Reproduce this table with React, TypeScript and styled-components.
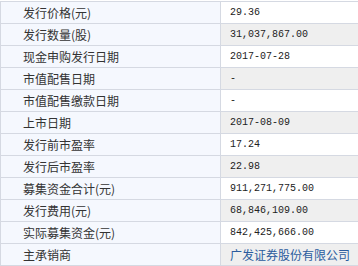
import React from 'react';
import styled, { createGlobalStyle } from 'styled-components';

const GlobalStyle = createGlobalStyle`
  html, body {
    margin: 0;
    padding: 0;
    background: #ffffff;
  }
`;

const Table = styled.div`
  width: 358px;
  margin-top: 1px;
  border-top: 1px solid #d5d9e2;
  border-left: 1px solid #d5d9e2;
  box-sizing: border-box;
  font-family: "Noto Sans CJK SC", "Liberation Sans", sans-serif;
  font-size: 12px;
  color: #333333;
`;

const Row = styled.div`
  display: grid;
  grid-template-columns: 220px 1fr;
  height: 22px;
  border-bottom: 1px solid #d5d9e2;
  box-sizing: border-box;
`;

const LabelCell = styled.div`
  display: flex;
  align-items: center;
  padding-left: 22px;
  background: #f5f8fe;
  border-right: 1px solid #d5d9e2;
  white-space: nowrap;
  line-height: 1;
`;

const ValueCell = styled.div<{ $striped?: boolean }>`
  display: flex;
  align-items: center;
  padding-left: 9px;
  background: ${({ $striped }) => ($striped ? '#efefef' : '#ffffff')};
  white-space: nowrap;
  line-height: 1;
`;

const Num = styled.span`
  font-family: "Liberation Mono", "DejaVu Sans Mono", monospace;
  font-size: 10px;
  color: #222222;
  padding-top: 1px;
`;

const Link = styled.span`
  color: #2b5c9e;
`;

type Item = { label: string; value: string; link?: boolean };

const items: Item[] = [
  { label: '发行价格(元)', value: '29.36' },
  { label: '发行数量(股)', value: '31,037,867.00' },
  { label: '现金申购发行日期', value: '2017-07-28' },
  { label: '市值配售日期', value: '-' },
  { label: '市值配售缴款日期', value: '-' },
  { label: '上市日期', value: '2017-08-09' },
  { label: '发行前市盈率', value: '17.24' },
  { label: '发行后市盈率', value: '22.98' },
  { label: '募集资金合计(元)', value: '911,271,775.00' },
  { label: '发行费用(元)', value: '68,846,109.00' },
  { label: '实际募集资金(元)', value: '842,425,666.00' },
  { label: '主承销商', value: '广发证券股份有限公司', link: true },
];

export default function App() {
  return (
    <>
      <GlobalStyle />
      <Table>
        {items.map((it, i) => (
          <Row key={it.label}>
            <LabelCell>{it.label}</LabelCell>
            <ValueCell $striped={i % 2 === 1}>
              {it.link ? <Link>{it.value}</Link> : <Num>{it.value}</Num>}
            </ValueCell>
          </Row>
        ))}
      </Table>
    </>
  );
}
